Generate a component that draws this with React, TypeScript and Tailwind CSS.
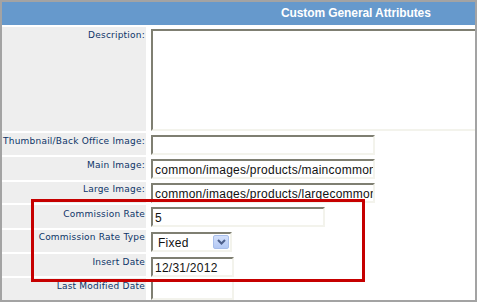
import React from 'react'

const label = "pr-[1px] text-right text-[9px] leading-[11px] tracking-[0.22px] text-[#0d3468] [font-family:'DejaVu_Sans',sans-serif]"
const box = 'bg-white border-t-2 border-l-2 border-t-[#7f7f72] border-l-[#7f7f72] border-b-2 border-r-2 border-b-[#f3f3ec] border-r-[#f3f3ec]'
const boxText = "overflow-hidden whitespace-nowrap pl-[2px] pt-[2px] text-[12px] leading-[15px] tracking-[0.25px] text-[#111] [font-family:'Liberation_Sans',sans-serif]"

function Row({ name, h, pt = 'pt-[3px]', children }: { name: string; h: string; pt?: string; children?: React.ReactNode }) {
  return (
    <div className={`flex ${h}`}>
      <div className={`w-[144px] shrink-0 bg-[#eeeeee] ${pt} ${label}`}>{name}</div>
      <div className="flex-1 bg-white pl-[5px]">{children}</div>
    </div>
  )
}

export default function App() {
  return (
    <div className="relative h-[302px] w-[477px] overflow-hidden border-2 border-[#a3a3a3] bg-white">
      <div className="flex h-[23px] items-center bg-[#6699cc] pb-[1px] pl-[279px] text-[12px] font-bold leading-[14px] tracking-[-0.1px] text-white [font-family:'Liberation_Sans',sans-serif]">
        Custom General Attributes
      </div>

      <div className="mt-[2px] flex flex-col gap-[2px]">
        <Row name="Description:" h="h-[104px]">
          <div className={`mt-[2px] h-[102px] w-[340px] ${box}`} />
        </Row>
        <Row name="Thumbnail/Back Office Image:" h="h-[22px]">
          <div className={`mt-[2px] h-[20px] w-[224px] ${box}`} />
        </Row>
        <Row name="Main Image:" h="h-[23px]">
          <div className={`mt-[2px] h-[20px] w-[224px] ${box} ${boxText}`}>common/images/products/maincommon</div>
        </Row>
        <Row name="Large Image:" h="h-[21px]" pt="pt-[2px]">
          <div className={`mt-[1px] h-[20px] w-[224px] ${box} ${boxText}`}>common/images/products/largecommon</div>
        </Row>
        <Row name="Commission Rate" h="h-[23px]" pt="pt-[4px]">
          <div className={`mt-[2px] h-[20px] w-[174px] ${box} ${boxText}`}>5</div>
        </Row>
        <Row name="Commission Rate Type" h="h-[22px]" pt="pt-[2px]">
          <div className={`mt-[2px] flex h-[20px] w-[81px] items-start justify-between ${box}`}>
            <span className="pl-[5px] pt-[2px] text-[12px] leading-[15px] tracking-[0.25px] text-[#111] [font-family:'Liberation_Sans',sans-serif]">Fixed</span>
            <span className="mr-[1px] mt-[1px] flex h-[14px] w-[16px] items-center justify-center rounded-[2px] border border-[#a7bdea] bg-gradient-to-b from-[#d3e0fb] to-[#b3c8f4]">
              <svg width="9" height="6" viewBox="0 0 9 6">
                <path d="M1 1 L4.5 4.5 L8 1" fill="none" stroke="#4d5f8c" strokeWidth="2" />
              </svg>
            </span>
          </div>
        </Row>
        <Row name="Insert Date" h="h-[22px]">
          <div className={`mt-[3px] h-[20px] w-[83px] ${box} ${boxText}`}>12/31/2012</div>
        </Row>
        <Row name="Last Modified Date" h="h-[22px]">
          <div className={`mt-[2px] h-[20px] w-[83px] ${box}`} />
        </Row>
      </div>

      <div className="absolute left-[29px] top-[197px] h-[83px] w-[334px] border-[3px] border-[#c60000]" />
    </div>
  )
}
